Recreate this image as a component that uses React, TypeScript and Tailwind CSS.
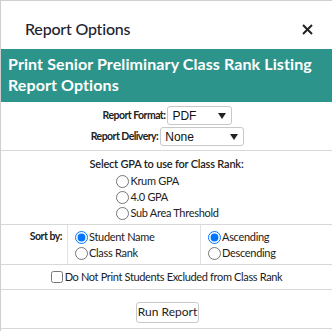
import React from "react";

const font = { fontFamily: "Lato, 'Noto Sans', sans-serif" };

function Select({ value, width }: { value: string; width: string }) {
  return (
    <div
      className={`${width} h-[19px] border border-[#c8c8c8] rounded-[3px] bg-white flex items-center justify-between pl-[4px] pr-[5px]`}
    >
      <span className="text-[12px] text-[#111] leading-none" style={{ fontFamily: "'Liberation Sans', Arial, sans-serif" }}>
        {value}
      </span>
      <svg width="8" height="6" viewBox="0 0 8 6">
        <path d="M0 0 L8 0 L4 6 Z" fill="#222" />
      </svg>
    </div>
  );
}

function Radio({ checked, label }: { checked?: boolean; label: string }) {
  return (
    <label className="flex items-center gap-[1px] h-[16px]">
      <input type="radio" readOnly checked={!!checked} className="m-0 w-[13px] h-[13px]" />
      <span className="text-[11px] tracking-[-0.3px] text-[#222]">{label}</span>
    </label>
  );
}

export default function App() {
  return (
    <div className="w-[332px] h-[331px] bg-white border-l border-t border-[#cfcfcf] overflow-hidden" style={font}>
      <div className="h-[48px] flex items-center justify-between pl-[24px] pr-[19px] pt-[8px]">
        <span className="text-[16px] text-[#1e2430] font-medium tracking-[-0.2px]">Report Options</span>
        <svg width="11" height="11" viewBox="0 0 11 11">
          <path d="M1 1 L10 10 M10 1 L1 10" stroke="#222" strokeWidth="2" />
        </svg>
      </div>
      <div className="h-[53px] bg-[#2c948a] px-[7px] pt-[4px] text-white font-bold text-[16px] leading-[21px] tracking-[0.1px]">
        <div>Print Senior Preliminary Class Rank Listing</div>
        <div>Report Options</div>
      </div>
      <div className="border-b border-[#d8d8d8] pt-[4px] pb-[4px] flex flex-col items-center gap-[2px] pl-[2px]">
        <div className="flex items-center gap-[2px]">
          <span className="text-[10.5px] font-bold tracking-[-0.55px] text-[#222]">Report Format:</span>
          <Select value="PDF" width="w-[65px]" />
        </div>
        <div className="flex items-center gap-[2px]">
          <span className="text-[10.5px] font-bold tracking-[-0.55px] text-[#222]">Report Delivery:</span>
          <Select value="None" width="w-[84px]" />
        </div>
      </div>
      <div className="h-[74px] border-b border-[#d8d8d8] flex flex-col items-center pt-[5px]">
        <div className="text-[11px] font-semibold tracking-[-0.2px] text-[#222] h-[16px] leading-[16px]">Select GPA to use for Class Rank:</div>
        <div className="flex flex-col pt-[1px] ml-[2px]">
          <Radio label="Krum GPA" />
          <Radio label="4.0 GPA" />
          <Radio label="Sub Area Threshold" />
        </div>
      </div>
      <div className="h-[40px] border-b border-[#d8d8d8] flex">
        <div className="w-[67px] border-r border-[#e2e2e2] flex justify-end pr-[5px] pt-[4px]">
          <span className="text-[10.5px] font-bold tracking-[-0.5px] text-[#222]">Sort by:</span>
        </div>
        <div className="w-[133px] border-r border-[#e2e2e2] flex flex-col pl-[7px] pt-[4px]">
          <Radio checked label="Student Name" />
          <Radio label="Class Rank" />
        </div>
        <div className="flex-1 flex flex-col pl-[7px] pt-[4px]">
          <Radio checked label="Ascending" />
          <Radio label="Descending" />
        </div>
      </div>
      <div className="h-[25px] border-b border-[#d8d8d8] flex items-center justify-center">
        <label className="flex items-center gap-[2px]">
          <input type="checkbox" readOnly className="m-0 w-[12px] h-[12px]" />
          <span className="text-[11px] tracking-[-0.35px] text-[#222]">Do Not Print Students Excluded from Class Rank</span>
        </label>
      </div>
      <div className="h-[39px] border-b border-[#d8d8d8] flex items-center justify-center pl-[2px] pt-[6px]">
        <button className="w-[63px] h-[21px] border border-[#c8c8c8] rounded-[3px] bg-white text-[12px] text-[#222]">
          Run Report
        </button>
      </div>
    </div>
  );
}
